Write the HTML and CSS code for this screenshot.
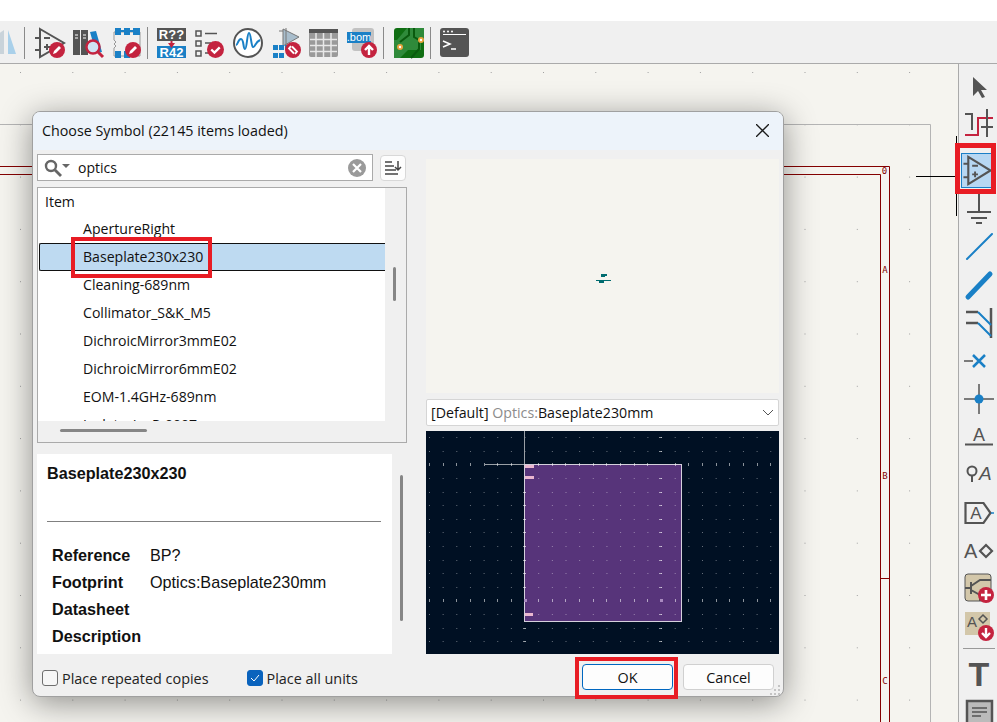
FILE: index.html
```html
<!DOCTYPE html>
<html lang="en">
<head>
<meta charset="UTF-8">
<title>Choose Symbol</title>
<link rel="stylesheet" href="styles.css">
</head>
<body>
<svg class="defs" width="0" height="0">
    <defs>
        <symbol id="badge-edit" viewBox="0 0 16 16">
            <circle cx="8" cy="8" r="8" fill="#c4233f"/>
            <path d="M4 12l1-3 5-5 2 2-5 5z" fill="#fff"/>
        </symbol>
        <symbol id="badge-check" viewBox="0 0 16 16">
            <circle cx="8" cy="8" r="8" fill="#c4233f"/>
            <path d="M4 8l3 3 5-5" fill="none" stroke="#fff" stroke-width="2.2"/>
        </symbol>
        <symbol id="badge-sync" viewBox="0 0 16 16">
            <circle cx="8" cy="8" r="8" fill="#c4233f"/>
            <path d="M6 4l-2 2.5 5 5M10 12l2-2.5-5-5" fill="none" stroke="#fff" stroke-width="1.8"/>
        </symbol>
        <symbol id="badge-up" viewBox="0 0 16 16">
            <circle cx="8" cy="8" r="8" fill="#c4233f"/>
            <path d="M8 13V4M4 8l4-4 4 4" fill="none" stroke="#fff" stroke-width="2.4"/>
        </symbol>
        <symbol id="badge-down" viewBox="0 0 16 16">
            <circle cx="8" cy="8" r="8" fill="#c4233f"/>
            <path d="M8 3v9M4 8l4 4 4-4" fill="none" stroke="#fff" stroke-width="2.4"/>
        </symbol>
        <symbol id="badge-plus" viewBox="0 0 16 16">
            <circle cx="8" cy="8" r="8" fill="#c4233f"/>
            <path d="M8 3v10M3 8h10" fill="none" stroke="#fff" stroke-width="2.6"/>
        </symbol>
    </defs>
</svg>

<div class="app">
    <div class="topband"></div>

    <div class="toolbar">
        <svg class="icon-cut" viewBox="0 0 18 30">
            <path d="M-2 6L4 2v24h-6z" fill="#c9d3da"/>
            <path d="M8 2l8 24H8z" fill="#a9d0ea"/>
        </svg>
        <span class="tsep"></span>
        <svg class="icon" viewBox="0 0 30 30">
            <path d="M5 1l24 14L5 29z" fill="none" stroke="#545454" stroke-width="2"/>
            <path d="M0 10h5M0 22h5M9 10h6M9 19h6M12 16v6" fill="none" stroke="#545454" stroke-width="2"/>
            <use href="#badge-edit" x="14" y="14" width="16" height="16"/>
        </svg>
        <svg class="icon" viewBox="0 0 30 30">
            <rect x="0" y="2" width="7" height="25" fill="#545454"/>
            <rect x="8" y="2" width="7" height="25" fill="#545454"/>
            <path d="M2 7h3M2 10h3M10 7h3M10 10h3" stroke="#fff" stroke-width="1"/>
            <path d="M17 4l6-1 6 21-6 1z" fill="#1a80c6"/>
            <circle cx="20" cy="19" r="6.5" fill="#cfe3f2" stroke="#c4233f" stroke-width="2.4"/>
            <path d="M25 24l5 5" stroke="#c4233f" stroke-width="3"/>
        </svg>
        <svg class="icon" viewBox="0 0 30 30">
            <path d="M3 4h26v24H3v-8l2-2-2-2 2-2-2-2z" fill="none" stroke="#999" stroke-width="1"/>
            <path d="M4 0h6v7H4zM13 0h6v7h-6zM22 0h7v7h-7zM4 23h6v7H4zM13 23h6v7h-6z" fill="#1a80c6"/>
            <path d="M10 3h3M19 3h3" stroke="#1a80c6" stroke-width="2"/>
            <use href="#badge-edit" x="14" y="14" width="16" height="16"/>
        </svg>
        <span class="tsep"></span>
        <svg class="icon" viewBox="0 0 30 30">
            <rect x="0" y="0" width="29" height="13" fill="#545454"/>
            <text x="14.5" y="11" class="i-bold" font-size="13" fill="#fff" text-anchor="middle">R??</text>
            <rect x="0" y="18" width="29" height="12" fill="#1a80c6"/>
            <text x="14.5" y="29" class="i-bold" font-size="13" fill="#fff" text-anchor="middle">R42</text>
            <path d="M14.500 13v3" stroke="#c4233f" stroke-width="2"/>
            <path d="M11 15h7l-3.500 5z" fill="#c4233f"/>
        </svg>
        <svg class="icon" viewBox="0 0 30 30">
            <path d="M1 3h5v5H1zM1 13h5v5H1zM1 23h5v5H1z" fill="none" stroke="#545454" stroke-width="1.500"/>
            <path d="M10 5.500h12M10 15h6M10 25h4" stroke="#545454" stroke-width="1.500"/>
            <use href="#badge-check" x="12" y="13" width="17" height="17"/>
        </svg>
        <svg class="icon" viewBox="0 0 30 30">
            <circle cx="15" cy="15" r="14" fill="#fff" stroke="#545454" stroke-width="2"/>
            <path d="M3 17c2 0 2-6 5-6s2 10 4 10 2-16 4-16 2 13 4 14 2-5 7-7" fill="none" stroke="#1a80c6" stroke-width="2"/>
        </svg>
        <svg class="icon" viewBox="0 0 30 30">
            <path d="M12 1l16 8-16 9z" fill="#a8bdcc" stroke="#777" stroke-width="1"/>
            <path d="M15 0v20M8 3h4" stroke="#777" stroke-width="1"/>
            <path d="M2 17h5v5H2zM8 17h5v5H8zM14 17h4v5h-4zM2 25h5v5H2zM8 25h5v5H8z" fill="#1a80c6"/>
            <use href="#badge-sync" x="14" y="14" width="16" height="16"/>
        </svg>
        <svg class="icon" viewBox="0 0 30 30">
            <rect x="0" y="1" width="29" height="28" rx="2" fill="#9a9a9a"/>
            <rect x="0" y="1" width="29" height="4" fill="#545454"/>
            <path d="M1 11.500h27M1 17.500h27M1 23.500h27M7 5v24M14.500 5v24M22 5v24" stroke="#e8e8e8" stroke-width="1.500"/>
        </svg>
        <svg class="icon" viewBox="0 0 30 30">
            <rect x="5" y="0" width="22" height="23" rx="3" fill="#c2c2c2"/>
            <rect x="0" y="4" width="24" height="11" fill="#1a80c6"/>
            <text x="12" y="13" class="i-regular" font-size="11" fill="#fff" text-anchor="middle">.bom</text>
            <use href="#badge-up" x="14" y="14" width="16" height="16"/>
        </svg>
        <span class="tsep"></span>
        <svg class="icon" viewBox="0 0 30 30">
            <rect x="0" y="0" width="30" height="30" rx="3" fill="#0f6e12"/>
            <path d="M13 0h17v12l-3 2v8H14l-8 8H0V12h3z" fill="#2f8a3a"/>
            <path d="M15 0v7l-9 7M20 0v9l5 3v9l-8 9" fill="none" stroke="#0a5a0e" stroke-width="2"/>
            <circle cx="6" cy="19" r="3" fill="#e8a33d"/><circle cx="6" cy="19" r="1.200" fill="#fff"/>
            <circle cx="27" cy="12" r="3" fill="#e8a33d"/><circle cx="27" cy="12" r="1.200" fill="#fff"/>
        </svg>
        <span class="tsep"></span>
        <svg class="icon" viewBox="0 0 30 30">
            <rect x="0" y="0" width="29" height="29" rx="3" fill="#545454"/>
            <path d="M3 6.500h23" stroke="#fff" stroke-width="1"/>
            <circle cx="4" cy="3.500" r="1" fill="#fff"/><circle cx="8" cy="3.500" r="1" fill="#fff"/><circle cx="12" cy="3.500" r="1" fill="#fff"/>
            <path d="M3 13l7 3-7 3M11 21h5" fill="none" stroke="#fff" stroke-width="1.500"/>
        </svg>
    </div>

    <div class="main">
        <div class="canvas">
            <svg class="sheet" viewBox="0 64 958 658">
                <defs>
                    <pattern id="grid" x="20" y="72" width="52.3" height="52.3" patternUnits="userSpaceOnUse">
                        <rect width="1" height="1" fill="#a0a0a0"/>
                    </pattern>
                </defs>
                <rect x="0" y="64" width="958" height="658" fill="url(#grid)"/>
                <path d="M0 124.500H930.500V722" fill="none" stroke="#b4b4b4" stroke-width="1"/>
                <path d="M0 166.500H889.500V722M0 174.500H880.500V722M880 578.500H889" fill="none" stroke="#840000" stroke-width="1"/>
                <text x="884.500" y="174" class="sheet-mark">0</text>
                <text x="885" y="273" class="sheet-mark">A</text>
                <text x="885" y="479" class="sheet-mark">B</text>
                <text x="885" y="684" class="sheet-mark">C</text>
                <path d="M916 176.500H956M956.500 136V216" fill="none" stroke="#000" stroke-width="1"/>
            </svg>

            <div class="dialog">
                <div class="dlg-title">
                    <span>Choose Symbol (22145 items loaded)</span>
                    <svg class="dlg-close" viewBox="0 0 12 12"><path d="M0 0l12 12M12 0L0 12" stroke="#1a1a1a" stroke-width="1.200"/></svg>
                </div>

                <div class="dlg-panes">
                    <div class="left-col">
                        <div class="search-row">
                            <div class="search">
                                <svg class="search-icon" viewBox="0 0 26 18">
                                    <circle cx="7" cy="7" r="5" fill="none" stroke="#666" stroke-width="2.400"/>
                                    <path d="M11 11l6 6" stroke="#666" stroke-width="2.800"/>
                                    <path d="M18 5h8l-4 4z" fill="#666"/>
                                </svg>
                                <span class="search-text">optics</span>
                                <svg class="search-clear" viewBox="0 0 18 18">
                                    <circle cx="9" cy="9" r="9" fill="#9a9a9a"/>
                                    <path d="M5 5l8 8M13 5l-8 8" stroke="#fff" stroke-width="2.200"/>
                                </svg>
                            </div>
                            <div class="sort-btn">
                                <svg viewBox="0 0 18 16" width="18" height="16">
                                    <path d="M1 2h7M1 6h9M1 10h11M1 14h13" stroke="#444" stroke-width="1.500"/>
                                    <path d="M14 1v9M11 7l3 3 3-3" fill="none" stroke="#444" stroke-width="1.500"/>
                                </svg>
                            </div>
                        </div>

                        <div class="list">
                            <div class="list-main">
                                <div class="list-items">
                                    <div class="list-head">Item</div>
                                    <div class="list-row">ApertureRight</div>
                                    <div class="list-row selected">Baseplate230x230</div>
                                    <div class="list-row">Cleaning-689nm</div>
                                    <div class="list-row">Collimator_S&amp;K_M5</div>
                                    <div class="list-row">DichroicMirror3mmE02</div>
                                    <div class="list-row">DichroicMirror6mmE02</div>
                                    <div class="list-row">EOM-1.4GHz-689nm</div>
                                    <div class="list-row">IsolatorIsoP-0007</div>
                                </div>
                                <div class="vscroll"><div class="vthumb"></div></div>
                            </div>
                            <div class="hscroll"><div class="hthumb"></div></div>
                        </div>

                        <div class="details">
                            <div class="details-body">
                                <div class="details-name">Baseplate230x230</div>
                                <div class="details-rule"></div>
                                <table class="details-table">
                                    <tr><th>Reference</th><td>BP?</td></tr>
                                    <tr><th>Footprint</th><td>Optics:Baseplate230mm</td></tr>
                                    <tr><th>Datasheet</th><td></td></tr>
                                    <tr><th>Description</th><td></td></tr>
                                </table>
                            </div>
                            <div class="details-scroll"><div class="details-thumb"></div></div>
                        </div>
                    </div>

                    <div class="right-col">
                        <div class="preview">
                            <svg width="16" height="9" viewBox="0 0 16 9" class="preview-sym">
                                <path d="M5 0h6v2H9v1H5zM0 6h15v1H8v2H3V7H0z" fill="#006b6f"/>
                            </svg>
                        </div>
                        <div class="fp-select">
                            <span>[Default] <span class="fp-lib">Optics:</span>Baseplate230mm</span>
                            <svg width="12" height="7" viewBox="0 0 12 7"><path d="M1 1l5 5 5-5" fill="none" stroke="#555" stroke-width="1"/></svg>
                        </div>
                        <svg class="fp-view" width="353" height="223" viewBox="426 431 353 223">
                            <rect x="426" y="431" width="353" height="223" fill="#001023"/>
                            <rect x="524.500" y="464.500" width="157" height="157" fill="#57347a" stroke="#d5d0dc" stroke-width="1"/>
                            <path class="fp-dots" d="M429 437.500H779M429 451.500H779M429 478.500H779M429 492.500H779M429 505.500H779M429 519.500H779M429 532.500H779M429 546.500H779M429 560.500H779M429 573.500H779M429 587.500H779M429 614.500H779M429 628.500H779M429 641.500H779"/>
                            <path d="M524.500 431V464M485 464.500H524" stroke="#9aa0a6" stroke-width="1"/>
                            <path class="fp-ticks" d="M429.500 463v3M443.500 463v3M456.500 463v3M470.500 463v3M484.500 463v3M497.500 463v3M511.500 463v3M538.500 463v3M552.500 463v3M565.500 463v3M579.500 463v3M593.500 463v3M606.500 463v3M620.500 463v3M634.500 463v3M647.500 463v3M675.500 463v3M688.500 463v3M702.500 463v3M716.500 463v3M729.500 463v3M743.500 463v3M757.500 463v3M770.500 463v3"/>
                            <path class="fp-ticks" d="M429.500 599v3M443.500 599v3M456.500 599v3M470.500 599v3M484.500 599v3M497.500 599v3M511.500 599v3M538.500 599v3M552.500 599v3M565.500 599v3M579.500 599v3M593.500 599v3M606.500 599v3M620.500 599v3M634.500 599v3M647.500 599v3M675.500 599v3M688.500 599v3M702.500 599v3M716.500 599v3M729.500 599v3M743.500 599v3M757.500 599v3M770.500 599v3"/>
                            <path class="fp-ticks" d="M659 437.500h3M659 451.500h3M659 478.500h3M659 492.500h3M659 505.500h3M659 519.500h3M659 532.500h3M659 546.500h3M659 560.500h3M659 573.500h3M659 587.500h3M659 614.500h3M659 628.500h3M659 641.500h3"/>
                            <path class="fp-ticks" d="M523 492.500h3M523 505.500h3M523 519.500h3M523 532.500h3M523 546.500h3M523 560.500h3M523 573.500h3M523 587.500h3M523 628.500h3M523 641.500h3"/>
                            <path d="M525 465h9v3h-9zM525 476h9v3h-9zM525 613h8v3h-8z" fill="#e9b7cf"/>
                            <path d="M524 599h3v3h-3zM660 599h3v3h-3z" fill="#a98ac0"/>
                        </svg>
                    </div>
                </div>

                <div class="dlg-footer">
                    <label class="check"><span class="check-box"></span>Place repeated copies</label>
                    <label class="check check-units">
                        <span class="check-box on">
                            <svg width="10" height="8" viewBox="0 0 10 8"><path d="M1 4l3 3 5-6" fill="none" stroke="#fff" stroke-width="1"/></svg>
                        </span>Place all units
                    </label>
                    <div class="footer-btns">
                        <div class="btn primary">OK</div>
                        <div class="btn">Cancel</div>
                    </div>
                </div>

                <svg class="grip" width="12" height="10" viewBox="0 0 12 10">
                    <path d="M8 0h2v2H8zM4 4h2v2H4zM8 4h2v2H8zM0 8h2v2H0zM4 8h2v2H4zM8 8h2v2H8z" fill="#c4c4c4"/>
                </svg>
            </div>
        </div>

        <div class="rtools">
            <svg class="icon" viewBox="0 0 30 30"><path d="M9 6v19l5-5 4 7 3-1-4-7h6z" fill="#545454"/></svg>
            <svg class="icon" viewBox="0 0 30 30">
                <path d="M1 5h7v16" fill="none" stroke="#545454" stroke-width="2"/>
                <path d="M1 26h13V9h15" fill="none" stroke="#c4233f" stroke-width="2"/>
                <path d="M23 0v28M17 18h12" stroke="#545454" stroke-width="2"/>
            </svg>
            <span class="rsep"></span>
            <svg class="icon tool-active" viewBox="0 0 30 30">
                <path d="M6 1l23 14L6 29z" fill="none" stroke="#545454" stroke-width="2.200"/>
                <path d="M1 8h5M1 22h5M10 10h6M10 19h6M13 16v6" fill="none" stroke="#545454" stroke-width="2"/>
            </svg>
            <svg class="icon" viewBox="0 0 30 30">
                <path d="M15 0v18M3 18h24M7 24h16M12 29h6" fill="none" stroke="#545454" stroke-width="2"/>
            </svg>
            <svg class="icon" viewBox="0 0 30 30"><path d="M3 27L28 2" stroke="#1a80c6" stroke-width="2" stroke-linecap="round"/></svg>
            <svg class="icon" viewBox="0 0 30 30"><path d="M4 27L26 4" stroke="#1a80c6" stroke-width="5" stroke-linecap="round"/></svg>
            <svg class="icon" viewBox="0 0 30 30">
                <path d="M2 4h12M2 15h12M27 0v30" fill="none" stroke="#545454" stroke-width="2.500"/>
                <path d="M14 4l13 13M14 15l13 13" fill="none" stroke="#1a80c6" stroke-width="2"/>
            </svg>
            <svg class="icon" viewBox="0 0 30 30">
                <path d="M0 15h9" stroke="#545454" stroke-width="1.500"/>
                <path d="M9 9l12 12M21 9L9 21" stroke="#1a80c6" stroke-width="2.500"/>
            </svg>
            <svg class="icon" viewBox="0 0 30 30">
                <path d="M15 0v30M0 15h30" stroke="#545454" stroke-width="1.500"/>
                <circle cx="15" cy="15" r="4.500" fill="#1a80c6"/>
            </svg>
            <svg class="icon" viewBox="0 0 30 30">
                <text x="15" y="19" class="i-regular" font-size="18" fill="#545454" text-anchor="middle">A</text>
                <path d="M1 22.500h28" stroke="#545454" stroke-width="2"/>
            </svg>
            <svg class="icon" viewBox="0 0 30 30">
                <circle cx="8" cy="11" r="4.500" fill="none" stroke="#545454" stroke-width="2"/>
                <path d="M8 16v6" stroke="#545454" stroke-width="2"/>
                <text x="15" y="20" class="i-italic" font-size="19" fill="#545454">A</text>
            </svg>
            <svg class="icon" viewBox="0 0 30 30">
                <path d="M1.500 5h18l7 10-7 10h-18z" fill="none" stroke="#545454" stroke-width="2.200"/>
                <path d="M27 15h3" stroke="#1a80c6" stroke-width="1.500"/>
                <text x="12" y="21" class="i-regular" font-size="17" fill="#545454" text-anchor="middle">A</text>
            </svg>
            <svg class="icon" viewBox="0 0 30 30">
                <text x="0" y="22" class="i-regular" font-size="20" fill="#545454">A</text>
                <path d="M22 9l6 6-6 6-6-6z" fill="none" stroke="#545454" stroke-width="2.200"/>
            </svg>
            <svg class="icon" viewBox="0 0 30 30">
                <rect x="1" y="0" width="26" height="27" rx="3" fill="#d3c7aa" stroke="#545454" stroke-width="1"/>
                <path d="M1 14h6M7 8v12M7 12l9-6h11M7 16l9 5v6" fill="none" stroke="#545454" stroke-width="2"/>
                <use href="#badge-plus" x="14" y="13" width="16" height="16"/>
            </svg>
            <svg class="icon" viewBox="0 0 30 30">
                <rect x="1" y="0" width="25" height="23" fill="#d3c7aa"/>
                <text x="3" y="15" class="i-regular" font-size="15" fill="#545454">A</text>
                <path d="M19 3l4 4-4 4-4-4z" fill="none" stroke="#545454" stroke-width="1.500"/>
                <use href="#badge-down" x="14" y="13" width="16" height="16"/>
            </svg>
            <span class="rsep"></span>
            <svg class="icon" viewBox="0 0 30 30">
                <text x="15" y="27" class="i-bold" font-size="34" fill="#545454" text-anchor="middle">T</text>
            </svg>
            <svg class="icon" viewBox="0 0 30 30">
                <rect x="3" y="4" width="25" height="24" fill="#bbb" stroke="#545454" stroke-width="2.500"/>
                <path d="M8 11h15M8 15h15M8 19h9" stroke="#545454" stroke-width="1.500"/>
            </svg>
        </div>
    </div>

    <div class="mark mark-item"></div>
    <div class="mark mark-ok"></div>
    <div class="mark mark-tool"></div>
</div>
</body>
</html>
```

FILE: styles.css
```css
*{
    box-sizing: border-box;
}
html, body{
    margin: 0;
    height: 100%;
}
body{
    font-family: "Open Sans", "Noto Sans", sans-serif;
    color: #111;
    overflow: hidden;
}
.defs{
    position: absolute;
}
.app{
    position: relative;
    width: 997px;
    height: 722px;
    display: flex;
    flex-direction: column;
    overflow: hidden;
    background: #fff;
}
.topband{
    height: 21px;
    background: #fff;
}

/* top toolbar */
.toolbar{
    height: 43px;
    flex: none;
    display: flex;
    align-items: center;
    gap: 8px;
    padding-top: 2px;
    background: #f0f0f0;
    border-bottom: 1px solid #aaa;
}
.icon{
    width: 30px;
    height: 30px;
    flex: none;
    overflow: visible;
}
.icon-cut{
    width: 18px;
    height: 30px;
    flex: none;
}
.tsep{
    width: 1px;
    height: 32px;
    flex: none;
    margin-left: -2px;
    margin-right: 1.5px;
    background: #8a8a8a;
}
.i-bold{
    font-family: "Liberation Sans", sans-serif;
    font-weight: 700;
}
.i-regular{
    font-family: "Liberation Sans", sans-serif;
}
.i-italic{
    font-family: "Liberation Sans", sans-serif;
    font-style: italic;
}

.main{
    flex: 1;
    display: flex;
    min-height: 0;
}

/* schematic canvas */
.canvas{
    position: relative;
    width: 959px;
    background: #f5f4ef;
    border-right: 1px solid #aaa;
}
.sheet{
    position: absolute;
    left: 0;
    top: 0;
    width: 958px;
    height: 658px;
}
.sheet-mark{
    font-family: "DejaVu Sans Mono", monospace;
    font-size: 9px;
    fill: #840000;
    text-anchor: middle;
}

/* right toolbar */
.rtools{
    width: 38px;
    display: flex;
    flex-direction: column;
    align-items: center;
    gap: 8px;
    padding: 7px 0 0 2px;
    background: #f0f0f0;
}
.rsep{
    width: 32px;
    height: 1px;
    flex: none;
    margin: -2px 0 2px;
    background: #999;
}
.tool-active{
    width: 32px;
    height: 35px;
    margin: -3px 5px -2px 0;
    padding: 2px 0;
    background: #b7d7f2;
    border: 1px solid #1a7fc7;
}

/* dialog */
.dialog{
    position: absolute;
    left: 32px;
    top: 47px;
    width: 752px;
    height: 586px;
    display: flex;
    flex-direction: column;
    background: #f0f0f0;
    border: 1px solid #a0a0a0;
    border-radius: 8px;
    box-shadow: 0 6px 32px rgba(0,0,0,.42);
    overflow: hidden;
}
.dlg-title{
    height: 38px;
    flex: none;
    display: flex;
    align-items: center;
    justify-content: space-between;
    padding: 0 14px 2px 9px;
    background: #edf3fa;
    font-size: 14.3px;
}
.dlg-close{
    width: 13px;
    height: 13px;
}
.dlg-panes{
    display: flex;
    height: 504px;
    flex: none;
    padding-left: 4px;
}
.left-col{
    width: 370px;
    flex: none;
    padding-top: 4px;
}
.search-row{
    display: flex;
    align-items: stretch;
    height: 27px;
}
.search{
    width: 336px;
    display: flex;
    align-items: center;
    padding: 0 6px;
    background: #fff;
    border: 1px solid #aaa;
    font-size: 14px;
}
.search-icon{
    width: 26px;
    height: 18px;
    flex: none;
}
.search-text{
    flex: 1;
    margin-left: 8px;
}
.search-clear{
    width: 18px;
    height: 18px;
}
.sort-btn{
    width: 26px;
    height: 26px;
    margin: 1px 0 0 7px;
    display: flex;
    align-items: center;
    justify-content: center;
    background: #fdfdfd;
    border: 1px solid #d8d8d8;
    border-radius: 4px;
}
.list{
    height: 256px;
    margin-top: 6px;
    display: flex;
    flex-direction: column;
    border: 1px solid #aaa;
    background: #f0f0f0;
}
.list-main{
    height: 233px;
    flex: none;
    display: flex;
    background: #fff;
}
.list-items{
    width: 347px;
    flex: none;
    overflow: hidden;
    font-size: 14.1px;
}
.list-head{
    height: 27px;
    line-height: 28px;
    padding-left: 7px;
}
.list-row{
    height: 28px;
    line-height: 28px;
    padding-left: 45px;
}
.list-row.selected{
    margin-left: 1px;
    padding-left: 43px;
    line-height: 26px;
    background: #bedaf1;
    border: 1px solid #111;
    border-right: none;
    border-radius: 2px 0 0 2px;
}
.vscroll{
    flex: 1;
    background: #f0f0f0;
}
.vthumb{
    width: 3px;
    height: 34px;
    margin: 79px 0 0 8px;
    border-radius: 2px;
    background: #868686;
}
.hscroll{
    flex: 1;
    padding-top: 8px;
}
.hthumb{
    width: 87px;
    height: 3px;
    margin-left: 22px;
    border-radius: 2px;
    background: #868686;
}
.details{
    height: 200px;
    margin-top: 11px;
    display: flex;
}
.details-body{
    width: 355px;
    flex: none;
    padding: 10px 11px 0 10px;
    background: #fff;
    font-family: "Liberation Sans", sans-serif;
    font-size: 16.2px;
}
.details-name{
    font-weight: 700;
    line-height: 18px;
}
.details-rule{
    height: 1px;
    margin-top: 39px;
    background: #808080;
}
.details-table{
    margin: 20px 0 0 5px;
    border-collapse: collapse;
}
.details-table th{
    width: 98px;
    height: 27px;
    padding: 0;
    font-weight: 700;
    text-align: left;
}
.details-table td{
    padding: 0;
}
.details-scroll{
    flex: 1;
}
.details-thumb{
    width: 3px;
    height: 146px;
    margin: 21px 0 0 8px;
    border-radius: 2px;
    background: #868686;
}
.right-col{
    width: 353px;
    flex: none;
    margin-left: 19px;
    padding-top: 9px;
    display: flex;
    flex-direction: column;
}
.preview{
    height: 234px;
    flex: none;
    display: flex;
    justify-content: center;
    align-items: center;
    background: #f5f4ef;
}
.preview-sym{
    margin: 5px 0 0 3px;
}
.fp-select{
    height: 27px;
    flex: none;
    margin-top: 6px;
    display: flex;
    align-items: center;
    justify-content: space-between;
    padding: 0 4px 0 4px;
    background: #fff;
    border: 1px solid #d5d5d5;
    border-radius: 2px;
    font-size: 14.2px;
}
.fp-lib{
    color: #8c8c8c;
}
.fp-view{
    display: block;
    flex: none;
    margin-top: 5px;
}
.fp-dots{
    fill: none;
    stroke: #fff;
    stroke-opacity: .4;
    stroke-width: 1;
    stroke-dasharray: 1 12.65;
}
.fp-ticks{
    fill: none;
    stroke: #fff;
    stroke-opacity: .55;
    stroke-width: 1;
}
.dlg-footer{
    flex: 1;
    display: flex;
    align-items: center;
    padding: 0 9px 0 9px;
    font-size: 14.4px;
    color: #222;
}
.check{
    display: flex;
    align-items: center;
    gap: 4px;
    margin-top: 6px;
}
.check-units{
    margin-left: 38px;
}
.check-box{
    width: 16px;
    height: 16px;
    display: flex;
    align-items: center;
    justify-content: center;
    background: #f6f6f6;
    border: 1px solid #6e6e6e;
    border-radius: 3px;
}
.check-box.on{
    background: #0a63bd;
    border-color: #0a63bd;
}
.footer-btns{
    margin: 4px 0 0 auto;
    display: flex;
    gap: 10px;
}
.btn{
    width: 91px;
    height: 26px;
    line-height: 25px;
    text-align: center;
    background: #fdfdfd;
    border: 1px solid #d0d0d0;
    border-radius: 4px;
    color: #111;
}
.btn.primary{
    border-color: #0067c0;
}
.grip{
    position: absolute;
    right: 1px;
    bottom: 1px;
}

/* red callouts drawn over the screenshot */
.mark{
    position: absolute;
    border: 4px solid #e81c24;
}
.mark-item{
    left: 71px;
    top: 237px;
    width: 141px;
    height: 41px;
}
.mark-ok{
    left: 575px;
    top: 657px;
    width: 103px;
    height: 42px;
}
.mark-tool{
    left: 955px;
    top: 143px;
    width: 41px;
    height: 51px;
    border-width: 5px;
}
```
